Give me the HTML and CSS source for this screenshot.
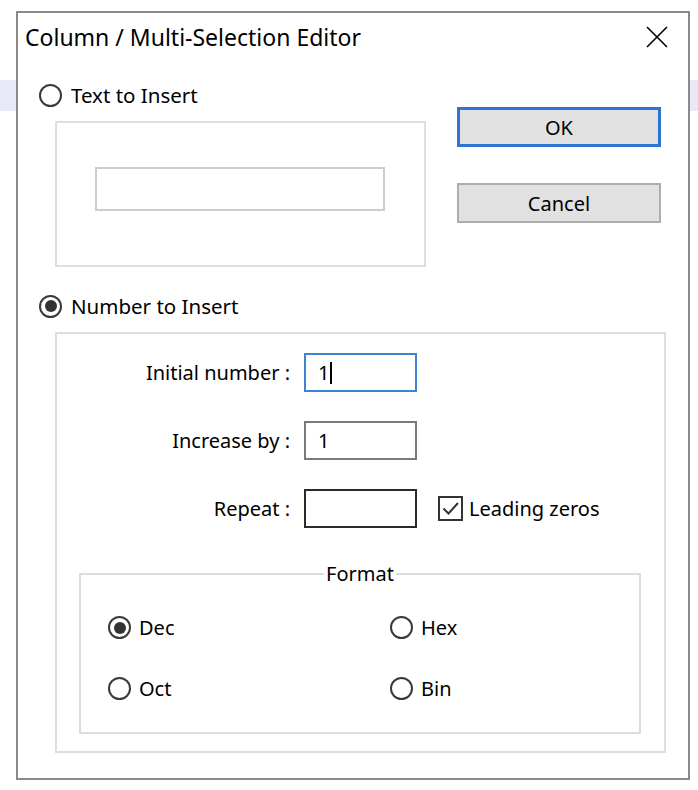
FILE: index.html
```html
<!DOCTYPE html>
<html>
<head>
<meta charset="utf-8">
<title>Column / Multi-Selection Editor</title>
<link rel="stylesheet" href="styles.css">
</head>
<body>
<div class="dialog">
  <div class="titlebar">
    <span class="title">Column / Multi-Selection Editor</span>
    <svg class="close" width="22" height="22" viewBox="0 0 22 22"><path d="M1 1L21 21M21 1L1 21" stroke="#000" stroke-width="1.6" fill="none"/></svg>
  </div>
  <div class="content">
    <div class="top">
      <div class="left">
        <div class="radio-row"><span class="radio"></span><span class="rlabel">Text to Insert</span></div>
        <div class="group1"><div class="textbox"></div></div>
      </div>
      <div class="buttons">
        <div class="btn btn-default">OK</div>
        <div class="btn">Cancel</div>
      </div>
    </div>
    <div class="radio-row num"><span class="radio checked"></span><span class="rlabel">Number to Insert</span></div>
    <div class="group2">
      <div class="fields">
        <div class="lbl">Initial number :</div>
        <div class="input focus">1<span class="caret"></span></div>
        <div></div>
        <div class="lbl">Increase by :</div>
        <div class="input">1</div>
        <div></div>
        <div class="lbl">Repeat :</div>
        <div class="input dark"></div>
        <div class="check-row">
          <span class="checkbox"><svg width="21" height="21" viewBox="0 0 21 21"><path d="M3.5 10.5L8.5 15.5L18 5" stroke="#333" stroke-width="2" fill="none"/></svg></span>
          <span class="clabel">Leading zeros</span>
        </div>
      </div>
      <fieldset class="format">
        <legend>Format</legend>
        <div class="fmt-grid">
          <div class="radio-item"><span class="radio checked"></span><span class="rlabel">Dec</span></div>
          <div class="radio-item"><span class="radio"></span><span class="rlabel">Hex</span></div>
          <div class="radio-item"><span class="radio"></span><span class="rlabel">Oct</span></div>
          <div class="radio-item"><span class="radio"></span><span class="rlabel">Bin</span></div>
        </div>
      </fieldset>
    </div>
  </div>
</div>
</body>
</html>
```

FILE: styles.css
```css
html, body {
  margin: 0;
  padding: 0;
}
body {
  width: 698px;
  height: 790px;
  background: linear-gradient(to bottom, #ffffff 0, #ffffff 80px, #e8e8f6 80px, #e8e8f6 111px, #ffffff 111px);
  font-family: "Noto Sans", "Open Sans", sans-serif;
  font-size: 20px;
  color: #000;
  overflow: hidden;
}
.dialog {
  margin: 11px 0 0 16px;
  width: 674px;
  height: 769px;
  box-sizing: border-box;
  border: 2px solid #8a8a8a;
  background: #fff;
}
.titlebar {
  height: 48px;
  display: flex;
  align-items: center;
  justify-content: space-between;
  padding: 0 20px 0 7px;
}
.title {
  font-size: 23px;
  line-height: 26px;
}
.close {
  display: block;
}
.content {
  padding-left: 21px;
}
.top {
  display: flex;
}
.left {
  width: 387px;
}
.radio-row {
  display: flex;
  align-items: center;
  height: 24px;
  gap: 9px;
  margin-top: 22px;
}
.radio-row .rlabel {
  font-size: 20.5px;
}
.radio-row.num {
  margin-top: 27px;
}
.rlabel, .lbl, .clabel {
  line-height: 24px;
}
.radio {
  width: 23px;
  height: 23px;
  box-sizing: border-box;
  border: 2px solid #3a3a3a;
  border-radius: 50%;
  background: #fff;
  display: flex;
  align-items: center;
  justify-content: center;
  flex: none;
}
.radio.checked::after {
  content: "";
  width: 12px;
  height: 12px;
  border-radius: 50%;
  background: #333;
}
.group1 {
  margin: 14px 0 0 16px;
  width: 371px;
  height: 146px;
  box-sizing: border-box;
  border: 2px solid #dedede;
  padding: 44px 0 0 38px;
}
.textbox {
  width: 290px;
  height: 44px;
  box-sizing: border-box;
  border: 2px solid #cdcdcd;
}
.buttons {
  margin: 46px 0 0 31px;
  display: flex;
  flex-direction: column;
  gap: 36px;
}
.btn {
  width: 204px;
  height: 40px;
  box-sizing: border-box;
  border: 2px solid #adadad;
  background: #e1e1e1;
  display: flex;
  align-items: center;
  justify-content: center;
  font-size: 20px;
}
.btn-default {
  border: 3px solid #2f74d2;
}
.group2 {
  margin: 14px 0 0 16px;
  width: 611px;
  height: 421px;
  box-sizing: border-box;
  border: 2px solid #dedede;
  padding: 19px 22px 0 22px;
}
.fields {
  display: grid;
  grid-template-columns: 211px 113px auto;
  column-gap: 14px;
  row-gap: 29px;
  align-items: center;
}
.lbl {
  text-align: right;
}
.input {
  height: 39px;
  box-sizing: border-box;
  border: 2px solid #7a7a7a;
  padding-left: 12px;
  display: flex;
  align-items: center;
  line-height: 24px;
}
.input.focus {
  border-color: #3f83d5;
}
.input.dark {
  border-color: #2b2b2b;
}
.caret {
  display: inline-block;
  width: 2px;
  height: 22px;
  background: #000;
  margin-left: 1px;
}
.check-row {
  display: flex;
  align-items: center;
  gap: 6px;
  margin-left: 7px;
}
.checkbox {
  width: 25px;
  height: 25px;
  box-sizing: border-box;
  border: 2px solid #333;
  display: flex;
  align-items: center;
  justify-content: center;
}
.checkbox svg {
  display: block;
}
.format {
  margin: 34px 0 0 0;
  width: 562px;
  box-sizing: border-box;
  border: 2px solid #dcdcdc;
  padding: 30px 0 32px 0;
  min-width: 0;
}
.format legend {
  margin: 0 auto;
  padding: 0 2px;
  line-height: 24px;
}
.fmt-grid {
  display: grid;
  grid-template-columns: 282px auto;
  row-gap: 38px;
  padding-left: 27px;
}
.radio-item {
  display: flex;
  align-items: center;
  gap: 8px;
  height: 23px;
}
```
